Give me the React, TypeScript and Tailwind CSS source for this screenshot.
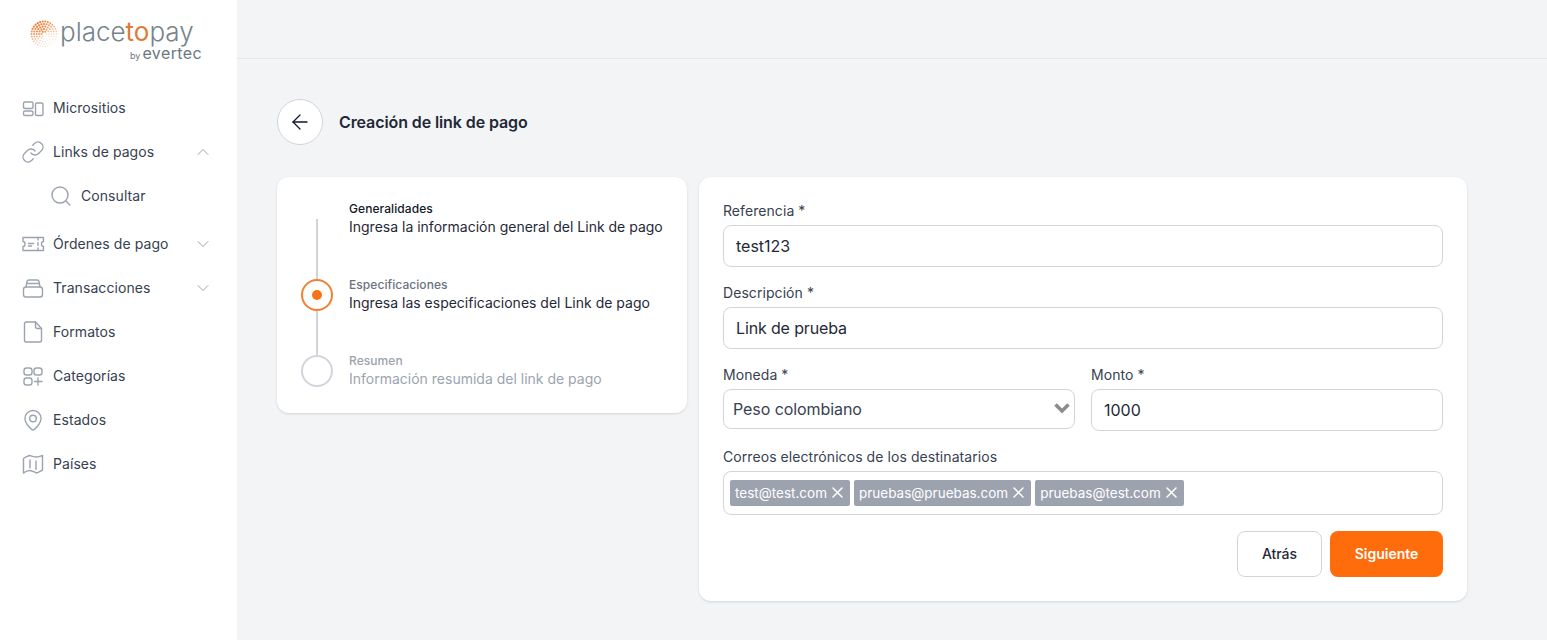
import { ArrowLeft, ChevronDown, ChevronUp, Link, Search } from "lucide-react";
import type { ReactNode } from "react";

const sw = 1.4;

function Svg({ children }: { children: ReactNode }) {
  return (
    <svg width="24" height="24" viewBox="0 0 24 24" fill="none" stroke="#9ca3af" strokeWidth={sw} strokeLinecap="round" strokeLinejoin="round" className="shrink-0">
      {children}
    </svg>
  );
}

const icons: Record<string, ReactNode> = {
  micro: (
    <Svg>
      <rect x="2.500" y="6" width="9.500" height="6.500" rx="1.500" />
      <rect x="2.500" y="15" width="9.500" height="4.500" rx="1.500" />
      <rect x="14.500" y="7" width="7.500" height="12.500" rx="1.500" />
    </Svg>
  ),
  link: <Link size={24} color="#9ca3af" strokeWidth={sw} className="shrink-0" />,
  search: <Search size={24} color="#9ca3af" strokeWidth={sw} className="shrink-0" />,
  ticket: (
    <Svg>
      <path d="M2 5.500h20.500v4c-1.500 0-2 1.200-2 2.500s.5 2.500 2 2.500v4H2v-4c1.500 0 2-1.200 2-2.500s-.5-2.500-2-2.500z" />
      <path d="M7.500 11.500h5M7.500 14h3M17 5.500v2.500M17 10.500v3M17 16v2.500" />
    </Svg>
  ),
  tx: (
    <Svg>
      <rect x="2.500" y="11" width="19" height="10" rx="2.500" />
      <path d="M5 11l1-5.500C6.200 4.500 7 4 8 4h8c1 0 1.800.5 2 1.500l1 5.500" />
      <path d="M5.700 7.500h12.600" />
    </Svg>
  ),
  file: (
    <Svg>
      <path d="M5 2h9.500l6 6.500v12c0 .8-.7 1.500-1.500 1.500H5c-.8 0-1.500-.7-1.500-1.500v-17C3.500 2.700 4.200 2 5 2z" />
      <path d="M14.500 2v4.500c0 1.100.9 2 2 2h4" />
    </Svg>
  ),
  cat: (
    <Svg>
      <rect x="3" y="4" width="8" height="7" rx="2.500" />
      <rect x="13" y="4" width="8" height="7" rx="2.500" />
      <rect x="3" y="14" width="8" height="7" rx="2.500" />
      <path d="M17 14v7M13.500 17.500h7.500" />
    </Svg>
  ),
  pin: (
    <Svg>
      <path d="M12 22c-1 0-8-6-8-11.500a8 8 0 0 1 16 0C20 16 13 22 12 22z" />
      <circle cx="12" cy="10.500" r="3.300" />
    </Svg>
  ),
  map: (
    <Svg>
      <path d="M2.500 6.500C4.500 5 6.500 4 8.500 3.500c2.300.5 4.700 1.500 7 1.500 2 0 4-1 6-1.500v14.500c-2 1-4 2.500-6 3-2.300-1-4.700-2.500-7-2.500-2 0-4 1-6 2.500z" />
      <path d="M9 8v8M15 9v8.500" />
    </Svg>
  ),
};

type Item = { icon: string; label: string; chevron?: "up" | "down"; sub?: boolean };

const items: Item[] = [
  { icon: "micro", label: "Micrositios" },
  { icon: "link", label: "Links de pagos", chevron: "up" },
  { icon: "search", label: "Consultar", sub: true },
  { icon: "ticket", label: "Órdenes de pago", chevron: "down" },
  { icon: "tx", label: "Transacciones", chevron: "down" },
  { icon: "file", label: "Formatos" },
  { icon: "cat", label: "Categorías" },
  { icon: "pin", label: "Estados" },
  { icon: "map", label: "Países" },
];

function LogoDots() {
  const dots: ReactNode[] = [];
  const cx = 14;
  const cy = 14;
  for (let ring = 1; ring < 6; ring++) {
    const n = ring * 6;
    for (let i = 0; i < n; i++) {
      const a = (i / n) * Math.PI * 2;
      const x = cx + Math.cos(a) * ring * 2.5;
      const y = cy + Math.sin(a) * ring * 2.5;
      const fade = Math.max(0, Math.sin(a + 0.5) * 0.5 + 0.5);
      const op = 1 - fade * 0.8;
      dots.push(<circle key={ring + "-" + i} cx={x} cy={y} r={1.1 - fade * 0.5} fill="#e8803c" opacity={op} />);
    }
  }
  return (
    <svg width="28" height="28" viewBox="0 0 28 28" className="mt-[3px] shrink-0">
      {dots}
    </svg>
  );
}

function Field({ label, value, className, inputClass }: { label: string; value: string; className?: string; inputClass?: string }) {
  return (
    <label className={"flex flex-col " + (className ?? "")}>
      <span className="mb-[4px] h-[20px] text-sm leading-[20px] tracking-[0.07px] text-[#374151]">{label}</span>
      <input
        readOnly
        value={value}
        className={"h-[42px] w-full rounded-lg border border-[#d1d5db] bg-white px-3 text-base text-[#1f2937] outline-none " + (inputClass ?? "")}
      />
    </label>
  );
}

function Tag({ text }: { text: string }) {
  return (
    <span className="flex h-[26px] items-center gap-[5px] rounded-[2px] bg-[#9ca3af] pl-[5px] pr-[7px] text-[13.5px] text-white">
      {text}
      <svg width="11" height="11" viewBox="0 0 11 11" fill="none" stroke="#ffffff" strokeWidth="1.5" strokeLinecap="round" className="-mt-[1px] shrink-0">
        <path d="M1 1l9 9M10 1l-9 9" />
      </svg>
    </span>
  );
}

export default function App() {
  return (
    <div className="flex min-h-[640px] bg-[#f3f4f6] font-['Inter',sans-serif]">
      <aside className="w-[237px] shrink-0 bg-white">
        <div className="flex h-[86px] flex-col items-start pl-[30px] pt-[17px]">
          <div className="flex h-[30px] items-center">
            <LogoDots />
            <span className="ml-[2px] text-[26px] font-light leading-[30px] text-[#77838b]">
              place<span className="font-normal text-[#e07b36]">to</span>pay
            </span>
          </div>
          <div className="-mt-[1px] ml-[100px] flex items-baseline gap-[2px] leading-[14px] text-[#6b7780]">
            <span className="text-[9px]">by</span>
            <span className="text-[16px] tracking-[0.4px]">evertec</span>
          </div>
        </div>
        <nav className="flex flex-col">
          {items.map((it) => (
            <div
              key={it.label}
              className={
                "flex h-[44px] items-center gap-[8px] pr-[24px] text-sm tracking-[0.07px] text-[#374151] " +
                (it.sub ? "mb-[4px] pl-[49px]" : "pl-[21px]")
              }
            >
              <span className="flex">{icons[it.icon]}</span>
              <span className="flex-1">{it.label}</span>
              {it.chevron === "up" && <ChevronUp size={20} strokeWidth={1.2} color="#9ca3af" />}
              {it.chevron === "down" && <ChevronDown size={20} strokeWidth={1.2} color="#9ca3af" />}
            </div>
          ))}
        </nav>
      </aside>

      <main className="flex min-w-0 flex-1 flex-col">
        <div className="h-[59px] border-b border-[#e5e7eb]" />
        <div className="pl-[40px] pr-[80px] pt-[40px]">
          <div className="flex items-center gap-4">
            <button className="flex h-[46px] w-[46px] items-center justify-center rounded-full border border-[#d1d5db] bg-white">
              <ArrowLeft size={24} strokeWidth={1.3} color="#111827" />
            </button>
            <h1 className="text-base font-semibold tracking-[-0.1px] text-[#1f2937]">Creación de link de pago</h1>
          </div>

          <div className="mt-[32px] flex items-start gap-[12px]">
            <section className="flex h-[236px] w-[410px] shrink-0 gap-4 rounded-xl bg-white p-6 shadow-sm">
              <div className="flex w-8 shrink-0 flex-col items-center pt-[18px]">
                <div className="h-[60px] w-[2px] bg-[#d1d5db]" />
                <div className="flex h-8 w-8 items-center justify-center rounded-full border-2 border-[#f08133]">
                  <div className="h-[10px] w-[10px] rounded-full bg-[#f97316]" />
                </div>
                <div className="h-[44px] w-[2px] bg-[#d1d5db]" />
                <div className="h-8 w-8 rounded-full border-2 border-[#d1d5db]" />
              </div>
              <div className="flex flex-col gap-[40px] whitespace-nowrap">
                <div>
                  <div className="text-xs font-medium leading-4 tracking-[0.07px] text-[#111827]">Generalidades</div>
                  <div className="text-sm leading-5 text-[#1f2937]">Ingresa la información general del Link de pago</div>
                </div>
                <div>
                  <div className="text-xs font-medium leading-4 tracking-[0.07px] text-[#6b7280]">Especificaciones</div>
                  <div className="text-sm leading-5 text-[#1f2937]">Ingresa las especificaciones del Link de pago</div>
                </div>
                <div>
                  <div className="text-xs font-medium leading-4 tracking-[0.07px] text-[#9ca3af]">Resumen</div>
                  <div className="text-sm leading-5 text-[#9ca3af]">Información resumida del link de pago</div>
                </div>
              </div>
            </section>

            <section className="flex min-w-0 flex-1 flex-col rounded-xl bg-white p-6 shadow-sm">
              <div className="flex flex-col gap-[16px]">
                <Field label="Referencia *" value="test123" />
                <Field label="Descripción *" value="Link de prueba" inputClass="tracking-[-0.14px]" />
                <div className="flex gap-4">
                  <label className="flex flex-1 flex-col">
                    <span className="mb-[4px] h-[20px] text-sm leading-[20px] tracking-[0.07px] text-[#374151]">Moneda *</span>
                    <span className="relative block">
                      <select className="h-[40px] w-full appearance-none rounded-lg border border-[#d1d5db] bg-white pl-[9px] pr-8 text-base tracking-[-0.07px] text-[#374151] outline-none">
                        <option>Peso colombiano</option>
                      </select>
                      <svg width="18" height="12" viewBox="0 0 18 12" fill="none" stroke="#8c8c8c" strokeWidth="3.500" className="pointer-events-none absolute right-[4px] top-[13px]">
                        <path d="M2.500 2.500 9 9l6.500-6.500" />
                      </svg>
                    </span>
                  </label>
                  <Field label="Monto *" value="1000" className="flex-1" />
                </div>
                <div className="flex flex-col">
                  <span className="mb-[4px] h-[20px] text-sm leading-[20px] tracking-[0.07px] text-[#374151]">Correos electrónicos de los destinatarios</span>
                  <div className="flex h-[44px] items-center gap-[4px] rounded-lg border border-[#d1d5db] bg-white px-[6px]">
                    <Tag text="test@test.com" />
                    <Tag text="pruebas@pruebas.com" />
                    <Tag text="pruebas@test.com" />
                  </div>
                </div>
              </div>
              <div className="mt-[16px] flex justify-end gap-2">
                <button className="h-[46px] w-[85px] rounded-lg border border-[#d1d5db] bg-white text-sm font-medium text-[#1f2937]">Atrás</button>
                <button className="h-[46px] w-[113px] rounded-lg bg-[#ff6c0c] text-sm font-semibold text-white">Siguiente</button>
              </div>
            </section>
          </div>
        </div>
      </main>
    </div>
  );
}
